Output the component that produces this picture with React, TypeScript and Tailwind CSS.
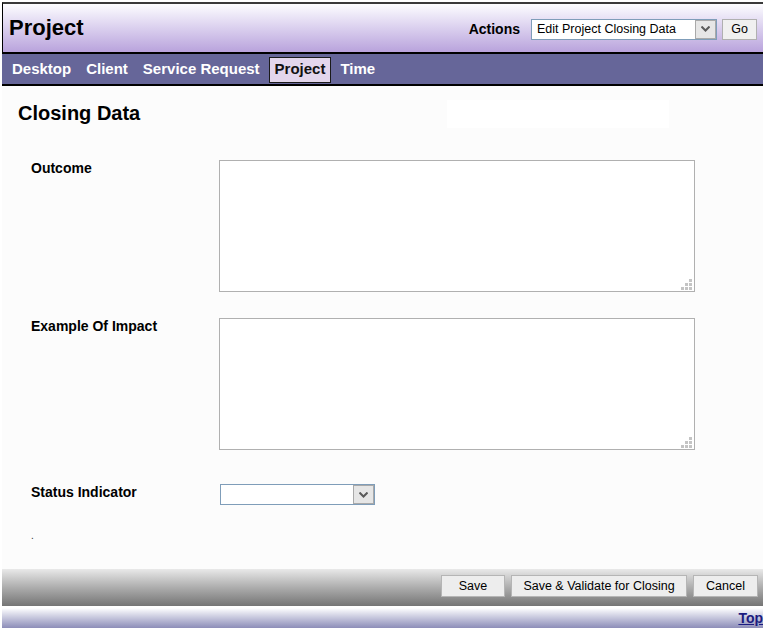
import { ReactNode } from "react";

const Chevron = ({ className }: { className?: string }) => (
  <svg width="9" height="6" viewBox="0 0 9 6" className={className}>
    <path d="M0.5 0.5 L4.5 4.5 L8.5 0.5" fill="none" stroke="#5a5a5a" strokeWidth="2" />
  </svg>
);

const FakeSelect = ({ width, value }: { width: string; value?: string }) => (
  <div className={`flex h-[21px] ${width} border border-[#7f9db9] bg-white`}>
    <div className="flex-1 pl-[5px] flex items-center text-[12.5px] text-black leading-none overflow-hidden whitespace-nowrap">
      {value}
    </div>
    <div className="w-[21px] h-full border border-[#a9a9a9] bg-[#e6e6e6] flex items-center justify-center">
      <Chevron />
    </div>
  </div>
);

const Grip = () => (
  <svg width="11" height="11" viewBox="0 0 11 11" className="absolute right-[2px] bottom-[1px]">
    <rect x="8" y="0" width="3" height="3" fill="#c4c4c4" />
    <rect x="4" y="4" width="3" height="3" fill="#c4c4c4" />
    <rect x="8" y="4" width="3" height="3" fill="#c4c4c4" />
    <rect x="0" y="8" width="3" height="3" fill="#c4c4c4" />
    <rect x="4" y="8" width="3" height="3" fill="#c4c4c4" />
    <rect x="8" y="8" width="3" height="3" fill="#c4c4c4" />
  </svg>
);

const TextBox = () => (
  <div className="relative w-[476px] h-[132px] border border-[#b0b0b0] bg-white">
    <Grip />
  </div>
);

const Row = ({ label, children, className }: { label: string; children: ReactNode; className?: string }) => (
  <div className={`flex items-start ${className ?? ""}`}>
    <div className="w-[188px] text-[14px] font-bold text-black leading-[16px]">{label}</div>
    {children}
  </div>
);

const Btn = ({ label, width }: { label: string; width: string }) => (
  <button className={`${width} h-[22px] border border-[#b5b5b5] bg-[#ededed] text-[12.5px] text-black leading-none`}>
    {label}
  </button>
);

const navItems = ["Desktop", "Client", "Service Request", "Project", "Time"];

export default function App() {
  return (
    <div className="w-[767px] h-[629px] bg-white pt-[2px] pl-[2px] font-['Liberation_Sans',Arial,sans-serif] overflow-hidden">
      <div className="w-[761px]">
        {/* header */}
        <div className="h-[52px] border-t-2 border-b-2 border-l border-t-[#3a3a3a] border-b-black border-l-black bg-linear-to-b from-[#fdfdff] to-[#b9a3dc] flex items-center justify-between pl-[6px] pr-[6px]">
          <h1 className="text-[22px] font-bold text-black leading-none">Project</h1>
          <div className="flex items-center mt-[2px]">
            <span className="text-[14px] font-bold text-black mr-[11px]">Actions</span>
            <FakeSelect width="w-[186px]" value="Edit Project Closing Data" />
            <button className="ml-[5px] w-[35px] h-[21px] border border-[#b0b0b0] bg-[#f0f0f0] text-[12.5px] text-black leading-none">
              Go
            </button>
          </div>
        </div>

        {/* nav */}
        <div className="h-[32px] bg-[#666699] border-b-2 border-black flex items-center pl-[4px] gap-[3px] pt-[1px]">
          {navItems.map((item) =>
            item === "Project" ? (
              <div
                key={item}
                className="h-[26px] px-[5px] flex items-center bg-[#e3d6ec] border border-[#1a1a1a] text-[15px] font-bold text-[#111]"
              >
                {item}
              </div>
            ) : (
              <div key={item} className="h-[26px] px-[6px] flex items-center text-[15px] font-bold text-white">
                {item}
              </div>
            )
          )}
        </div>

        {/* main */}
        <div className="h-[483px] bg-[#fcfcfc] pt-[14px]">
          <div className="flex items-start h-[28px]">
            <h2 className="w-[445px] pl-[16px] mt-[1px] text-[20px] font-bold text-black leading-[24px]">Closing Data</h2>
            <div className="w-[222px] h-[28px] bg-white" />
          </div>

          <div className="pl-[29px]">
            <Row label="Outcome" className="mt-[32px]">
              <TextBox />
            </Row>
            <Row label="Example Of Impact" className="mt-[26px]">
              <TextBox />
            </Row>
            <Row label="Status Indicator" className="mt-[34px]">
              <div className="ml-[1px]">
                <FakeSelect width="w-[155px]" />
              </div>
            </Row>
            <div className="mt-[25px] text-[10px] leading-[12px] text-[#333]">.</div>
          </div>
        </div>

        {/* toolbar */}
        <div className="h-[37px] bg-linear-to-b from-[#e9e9e9] to-[#757575] flex justify-end items-start pt-[6px] pr-[5px] gap-[6px]">
          <Btn label="Save" width="w-[64px]" />
          <Btn label="Save & Validate for Closing" width="w-[176px]" />
          <Btn label="Cancel" width="w-[65px]" />
        </div>

        {/* bottom bar */}
        <div className="mt-[2px] h-[20px] bg-linear-to-b from-white to-[#8d8db8] flex items-center justify-end">
          <a href="#" className="text-[14px] font-bold text-[#1c1c80] underline leading-none">
            Top
          </a>
        </div>
      </div>
    </div>
  );
}
